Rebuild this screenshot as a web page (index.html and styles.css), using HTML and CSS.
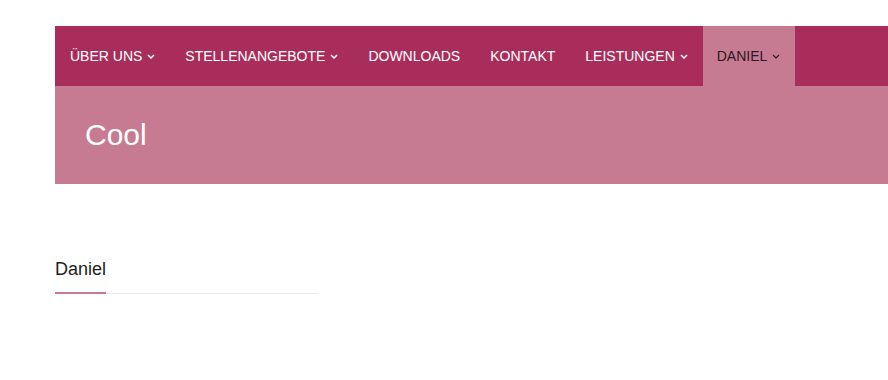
FILE: index.html
```html
<!DOCTYPE html>
<html lang="de">
<head>
<meta charset="utf-8">
<link rel="stylesheet" href="styles.css">
</head>
<body>
<div class="page">
  <nav class="nav">
    <a class="item">ÜBER UNS<svg class="chev" viewBox="0 0 8 5"><path d="M1 1l3 3 3-3"/></svg></a>
    <a class="item">STELLENANGEBOTE<svg class="chev" viewBox="0 0 8 5"><path d="M1 1l3 3 3-3"/></svg></a>
    <a class="item">DOWNLOADS</a>
    <a class="item">KONTAKT</a>
    <a class="item">LEISTUNGEN<svg class="chev" viewBox="0 0 8 5"><path d="M1 1l3 3 3-3"/></svg></a>
    <a class="item active">DANIEL<svg class="chev thin" viewBox="0 0 8 5"><path d="M1 1l3 3 3-3"/></svg></a>
  </nav>
  <header class="banner"><h1 class="title">Cool</h1></header>
  <section class="content">
    <div class="widget">
      <h3 class="widget-title">Daniel</h3>
      <div class="rule"><span class="rule-accent"></span></div>
    </div>
  </section>
</div>
</body>
</html>
```
FILE: styles.css
```css
html, body { margin: 0; padding: 0; background: #fff; }
body { font-family: "Liberation Sans", Arial, sans-serif; overflow: hidden; }
.page { padding: 26px 0 0 55px; }
.nav { display: flex; height: 60px; background: #a92d5b; }
.item { display: flex; align-items: center; padding: 0 15px; color: #fff; font-size: 14px; white-space: nowrap; }
.item.active { background: #c77b93; color: #2a1a22; padding-left: 14px; }
.chev { width: 8px; height: 5px; margin-left: 5px; margin-top: 1px; fill: none; stroke: currentColor; stroke-width: 1.5; }
.chev.thin { stroke-width: 1.1; }
.banner { background: #c77b93; height: 98px; display: flex; align-items: center; padding-left: 30px; }
.title { margin: 0; font-weight: normal; font-size: 30px; color: #fff; line-height: 1; }
.content { padding-top: 75px; }
.widget { width: 264px; }
.widget-title { margin: 0; font-weight: normal; font-size: 18px; color: #222; line-height: 20px; }
.rule { position: relative; margin-top: 14px; height: 1px; background: #e8e8e8; }
.rule-accent { position: absolute; left: 0; top: -1px; width: 51px; height: 3px; background: #c77b93; }
```
